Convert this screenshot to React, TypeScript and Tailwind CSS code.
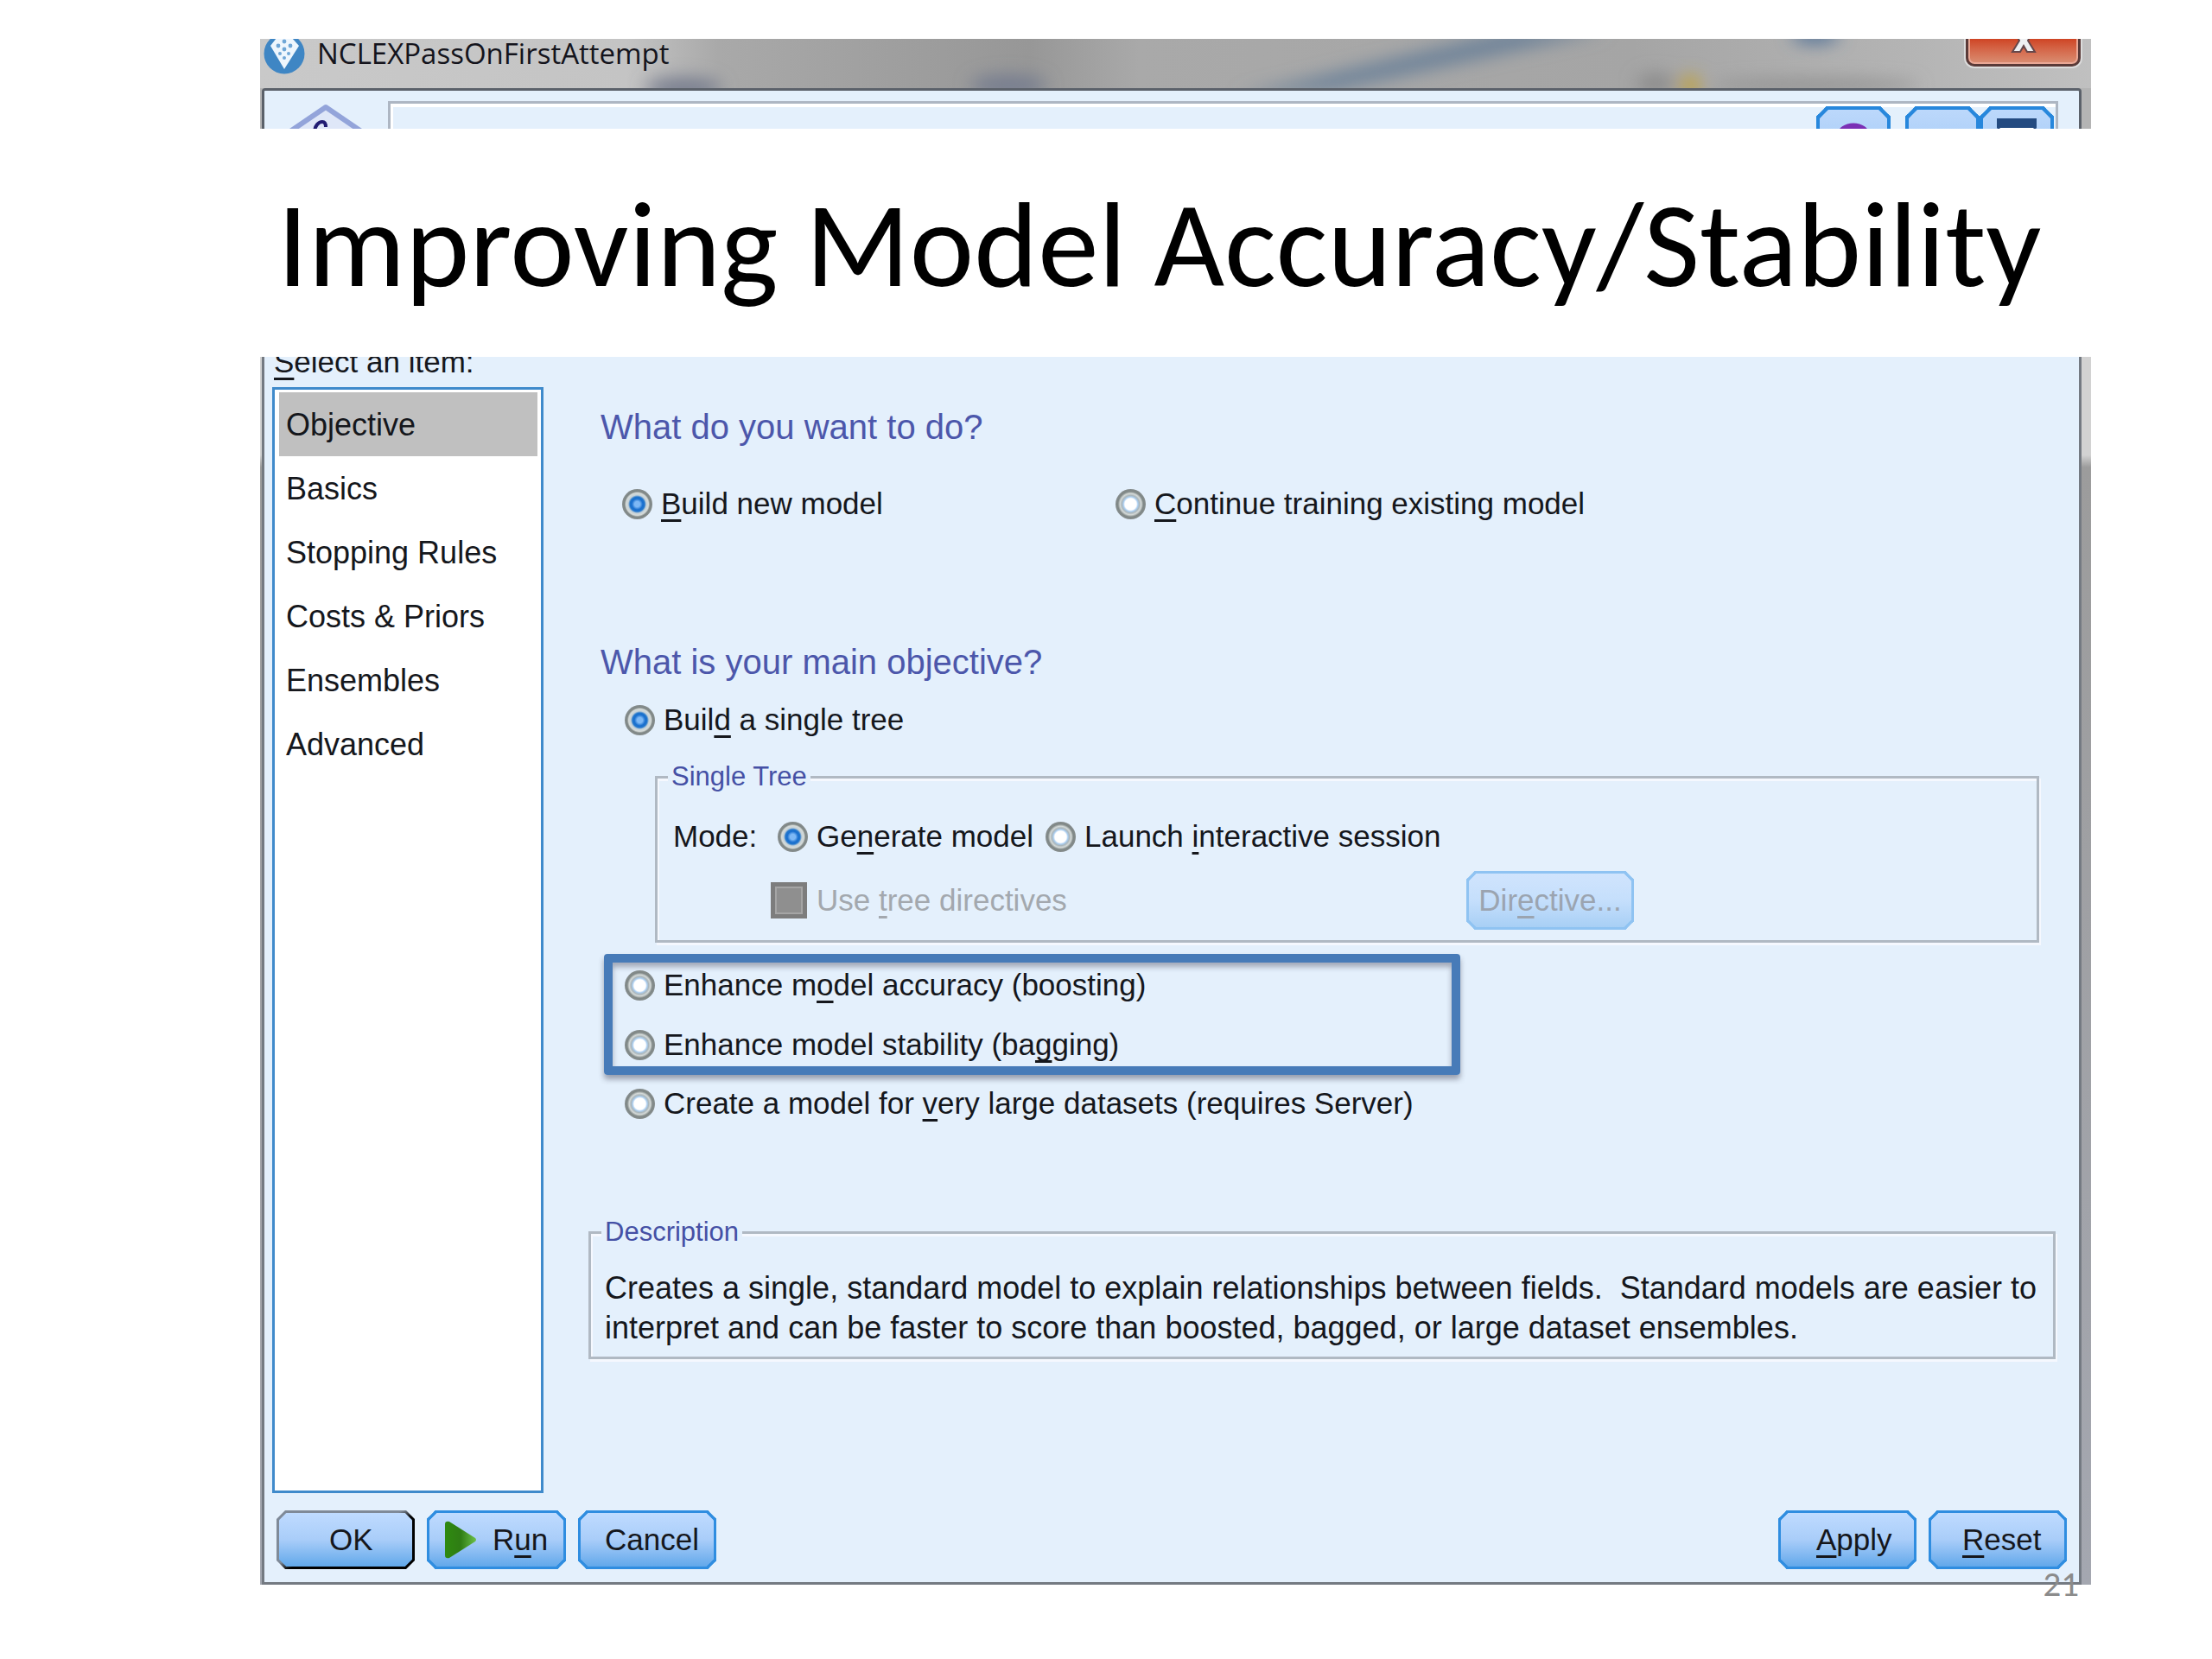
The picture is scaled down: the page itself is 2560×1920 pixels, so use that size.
import { useState, type ReactNode } from "react";
import clsx from "clsx";

const ITEMS = ["Objective", "Basics", "Stopping Rules", "Costs & Priors", "Ensembles", "Advanced"];

const RADIO =
	"h-[35px] w-[35px] shrink-0 appearance-none rounded-full bg-[radial-gradient(circle_closest-side,#ffffff_0_38%,#a9cdf0_48%,#aab6bc_58%,#d5dad8_70%,#7f8786_84%,#868d8d_100%)] checked:bg-[radial-gradient(circle_closest-side,#7db8f5_0_18%,#1a70cf_36%,#1f74cc_48%,#c6d2d8_60%,#d5dad8_74%,#7f8786_84%,#868d8d_100%)]";

const BUTTON =
	"flex h-[68px] shrink-0 items-center rounded-[10px] border-[3px] text-[35px] leading-[40px] [corner-shape:bevel]";

const BUTTON_FACE = "border-[#2f8de0] bg-linear-to-b from-[#bfdbff] via-[#a9cdf9] to-[#61a8ea]";

// Default button: lit from the top left, black on the far edges
const BUTTON_DEFAULT =
	"border-transparent [background:linear-gradient(#bfdbff,#a9cdf9,#61a8ea)_padding-box,linear-gradient(to_bottom_right,#7f8a98_46%,#000000_54%)_border-box]";

const FIELDSET =
	"border-[3px] border-[#b0b9c3] shadow-[inset_2px_3px_0_#f5f8fe,2px_3px_0_#f5f8fe]";

const LEGEND = "bg-[#e4f0fc] px-1 text-[31px] leading-[36px] text-[#4550a5]";

// Access-key letter of a label
function Key({ children }: { children: string }) {
	return (
		<span className="underline decoration-[3px] underline-offset-[6px] [text-decoration-skip-ink:none]">{children}</span>
	);
}

interface RadioProps {
	name: string;
	value: string;
	current: string;
	onSelect: (value: string) => void;
	children: ReactNode;
}

function Radio({ name, value, current, onSelect, children }: RadioProps) {
	return (
		<label className="flex items-center gap-[10px] text-[35px] leading-[36px] whitespace-nowrap">
			<input type="radio" name={name} value={value} checked={current === value} onChange={() => onSelect(value)} className={RADIO} />
			<span>{children}</span>
		</label>
	);
}

function AppIcon() {
	return (
		<svg viewBox="0 0 48 48" className="h-12 w-12 shrink-0" aria-hidden="true">
			<circle cx="24" cy="24" r="23.5" fill="#3f86c4" />
			<path d="M8 15 L15 6 H33 L41 15 L24 42 Z" fill="#eef6fd" />
			<g fill="#6fa6d6">
				<circle cx="24" cy="10" r="2.4" />
				<circle cx="17" cy="15" r="2.4" />
				<circle cx="31" cy="15" r="2.4" />
				<circle cx="24" cy="19" r="2.4" />
				<circle cx="19" cy="24" r="2" />
				<circle cx="29" cy="24" r="2" />
				<circle cx="24" cy="29" r="2" />
			</g>
		</svg>
	);
}

// Blurred desktop seen through the glass title bar
function GlassReflection() {
	return (
		<svg viewBox="0 0 2119 57" preserveAspectRatio="none" className="absolute inset-0 h-full w-full" aria-hidden="true">
			<defs>
				<filter id="soft" x="-20%" y="-60%" width="140%" height="220%">
					<feGaussianBlur stdDeviation="10" />
				</filter>
				<linearGradient id="glass">
					<stop offset="0" stopColor="#c9c9c9" />
					<stop offset="0.2" stopColor="#c4c4c4" />
					<stop offset="0.25" stopColor="#a9a9a9" />
					<stop offset="0.42" stopColor="#979797" />
					<stop offset="0.48" stopColor="#a9a9a9" />
					<stop offset="0.75" stopColor="#a5a5a5" />
					<stop offset="0.9" stopColor="#b4b4b4" />
					<stop offset="1" stopColor="#c0c0c0" />
				</linearGradient>
			</defs>
			<rect width="2119" height="57" fill="url(#glass)" />
			<g filter="url(#soft)">
				<ellipse cx="490" cy="57" rx="44" ry="12" fill="#747a8c" />
				<ellipse cx="866" cy="54" rx="44" ry="12" fill="#747b8e" />
				<path d="M1130 66 L1240 60 L1560 -10 L1450 -10 Z" fill="#6d8299" />
				<ellipse cx="1800" cy="-4" rx="28" ry="9" fill="#4f6f96" />
				<ellipse cx="1615" cy="52" rx="22" ry="12" fill="#8b8b8b" />
				<ellipse cx="1655" cy="54" rx="12" ry="12" fill="#c0a23e" />
				<ellipse cx="1800" cy="54" rx="120" ry="7" fill="#8e8e8e" />
			</g>
		</svg>
	);
}

function ModelIcon() {
	return (
		<svg viewBox="0 0 96 96" className="mt-[3px] h-24 w-24 shrink-0" aria-hidden="true">
			<path d="M48 4 L92 34 V70 L48 94 L4 70 V34 Z" fill="#dfe7f8" stroke="#93a4da" strokeWidth="6" strokeLinejoin="round" />
			<path d="M35 34 C35 25 40 21 44 21 C47 21 48 23 48 27" fill="none" stroke="#211c72" strokeWidth="4" />
		</svg>
	);
}

function TitleBar() {
	return (
		<div className="relative flex h-[57px] shrink-0 items-start justify-between overflow-hidden">
			<GlassReflection />
			<div className="relative -mt-[7px] flex items-center gap-[14px] pl-1">
				<AppIcon />
				<span className="font-['Open_Sans',sans-serif] text-[33px] leading-[48px] text-[#14141c]">NCLEXPassOnFirstAttempt</span>
			</div>
			<button type="button" aria-label="Close" className="relative mr-3 -mt-8 flex h-[64px] w-[133px] items-end justify-center rounded-[10px] border-[3px] border-[#5a3a38] bg-linear-to-b from-[#c93a1c] from-50% via-[#cf4423] to-[#d98f74] pb-3 shadow-[0_0_0_2px_#dcdcdc,inset_0_0_0_2px_#e9a795]">
				<svg viewBox="0 0 30 30" className="h-[30px] w-[30px]" aria-hidden="true">
					<path d="M3 2 H11 L15 9 L19 2 H27 L20 15 L28 28 H19 L15 21 L11 28 H2 L10 15 Z" fill="#eef0f2" stroke="#65474a" strokeWidth="2" />
				</svg>
			</button>
		</div>
	);
}

function Toolbar() {
	const tool = "flex h-[86px] w-[86px] justify-center rounded-[12px] border-[4px] border-[#2787dc] bg-linear-to-b from-[#bcd8fb] to-[#9cc5f5] [corner-shape:bevel]";
	return (
		<div className="ml-[2px] mr-[11px] flex min-w-0 flex-1 items-start rounded-t-[4px] border-[3px] border-b-0 border-[#5b616a] bg-[#e4f0fc] pl-[23px] pt-3">
			<ModelIcon />
			<div className="mr-6 ml-[24px] flex h-24 flex-1 justify-end border-x-[3px] border-t-[3px] border-[#adb6c3] shadow-[inset_3px_4px_0_#ffffff]">
				<button type="button" aria-label="Help" className={clsx(tool, "mr-[17px] mt-[3px]")}>
					<svg viewBox="0 0 40 60" className="mt-[14px] h-[60px] w-10" aria-hidden="true">
						<path d="M5 18 C5 2 35 2 35 18 C35 30 20 28 20 42" fill="none" stroke="#7a2fb5" strokeWidth="9" />
					</svg>
				</button>
				<button type="button" aria-label="Minimize" className={clsx(tool, "mt-[3px]")} />
				<button type="button" aria-label="Maximize" className={clsx(tool, "mt-[3px] mr-[2px]")}>
					<svg viewBox="0 0 46 50" className="mt-[10px] h-[50px] w-[46px]" aria-hidden="true">
						<rect x="2" y="2" width="42" height="46" fill="#ffffff" stroke="#234a80" strokeWidth="3" />
						<rect width="46" height="11" fill="#234a80" />
					</svg>
				</button>
			</div>
		</div>
	);
}

export default function App() {
	const [item, setItem] = useState("Objective");
	const [task, setTask] = useState("new");
	const [objective, setObjective] = useState("single");
	const [mode, setMode] = useState("generate");

	return (
		<main className="min-h-screen bg-white pt-[45px] pr-[140px] pl-[301px] font-['Liberation_Sans',Arial,sans-serif] text-[#15171c]">
			<header className="flex h-[104px] flex-col overflow-hidden bg-[#b4b4b4]">
				<TitleBar />
				<Toolbar />
			</header>

			<div className="flex h-[264px] items-center pt-1 pl-5">
				<h1 className="font-['Carlito','Calibri','Lato',sans-serif] text-[141px] leading-[160px] whitespace-nowrap text-black">
					Improving Model Accuracy/Stability
				</h1>
			</div>

			<div className="relative">
				<div className="overflow-hidden bg-linear-to-b from-[#d2d2d2] from-8% via-[#9c9c9c] via-9% to-[#a4a7b0] pr-[11px] pl-[2px]">
					<div className="flex flex-col border-x-[3px] border-b-[3px] border-[#747a82] bg-[#e4f0fc] pb-[15px]">
						<div className="flex">
							<nav className="ml-[9px] flex w-[314px] shrink-0 flex-col">
								<span id="items" className="-mt-[14px] mb-[9px] pl-[2px] text-[35px] leading-[40px] whitespace-nowrap">
									<Key>S</Key>elect an item:
								</span>
								<ul aria-labelledby="items" className="flex-1 border-[3px] border-[#3f8acb] bg-white py-[3px] pr-1 pl-[5px]">
									{ITEMS.map((name) => (
										<li key={name}>
											<button type="button" onClick={() => setItem(name)} className={clsx("h-[74px] w-full pt-[2px] pl-2 text-left text-[36px] leading-[40px]", item === name && "bg-[#c0c0c0]")}>
												{name}
											</button>
										</li>
									))}
								</ul>
							</nav>

							<section className="mr-[27px] ml-[52px] flex min-w-0 flex-1 flex-col pt-[59px] pb-[155px]">
								<h2 className="pl-[14px] text-[40px] leading-[44px] text-[#4c57ab]">What do you want to do?</h2>
								<div className="mt-[49px] flex pl-[39px]">
									<div className="w-[571px]">
										<Radio name="task" value="new" current={task} onSelect={setTask}><Key>B</Key>uild new model</Radio>
									</div>
									<Radio name="task" value="continue" current={task} onSelect={setTask}><Key>C</Key>ontinue training existing model</Radio>
								</div>

								<h2 className="mt-[143px] pl-[14px] text-[40px] leading-[44px] text-[#4c57ab]">What is your main objective?</h2>
								<div className="mt-[27px] pl-[42px]">
									<Radio name="objective" value="single" current={objective} onSelect={setObjective}>Buil<Key>d</Key> a single tree</Radio>
								</div>

								<fieldset className={clsx(FIELDSET, "mt-[30px] mr-[19px] ml-[77px] pb-3 pl-[18px]")}>
									<legend className={clsx(LEGEND, "-ml-[6px]")}>Single Tree</legend>
									<div className="mt-[33px] flex items-center gap-[14px]">
										<span className="w-[107px] text-[35px] leading-[36px]">Mode:</span>
										<Radio name="mode" value="generate" current={mode} onSelect={setMode}>Ge<Key>n</Key>erate model</Radio>
										<Radio name="mode" value="launch" current={mode} onSelect={setMode}>Launch <Key>i</Key>nteractive session</Radio>
									</div>
									<div className="mt-[22px] flex items-center pl-[113px]">
										<label className="flex w-[805px] items-center gap-[11px] text-[35px] leading-[40px] text-[#a3a8ae]">
											<input type="checkbox" disabled className="h-[42px] w-[42px] appearance-none border-[5px] border-[#7d7d7d] bg-[#8f8f8f] shadow-[inset_0_0_0_2px_#a5a5a5]" />
											<span>Use <Key>t</Key>ree directives</span>
										</label>
										<button type="button" disabled className={clsx(BUTTON, "w-[194px] justify-center border-[#8fc3f2] bg-linear-to-b from-[#d0e4fd] via-[#c5dffc] to-[#a8cff5] text-[#9ba4b0]")}>
											<span>Dir<Key>e</Key>ctive...</span>
										</button>
									</div>
								</fieldset>

								<div className="mt-[13px] ml-[18px] flex w-[991px] flex-col gap-[33px] rounded-[4px] border-[10px] border-[#477bb8] pt-2 pb-[7px] pl-[14px] shadow-[0_5px_6px_rgba(60,60,80,0.45),inset_0_5px_6px_rgba(60,60,80,0.4)]">
									<Radio name="objective" value="boosting" current={objective} onSelect={setObjective}>Enhance m<Key>o</Key>del accuracy (boosting)</Radio>
									<Radio name="objective" value="bagging" current={objective} onSelect={setObjective}>Enhance model stability (ba<Key>g</Key>ging)</Radio>
								</div>
								<div className="mt-[15px] pl-[42px]">
									<Radio name="objective" value="large" current={objective} onSelect={setObjective}>Create a model for <Key>v</Key>ery large datasets (requires Server)</Radio>
								</div>

								<fieldset className={clsx(FIELDSET, "mt-[113px] pr-1 pb-[10px] pl-[16px]")}>
									<legend className={clsx(LEGEND, "-ml-1")}>Description</legend>
									<p className="mt-[24px] text-[36px] leading-[46px]">
										Creates a single, standard model to explain relationships between fields.&nbsp; Standard models are easier to interpret and can be faster to score than boosted, bagged, or large dataset ensembles.
									</p>
								</fieldset>
							</section>
						</div>

						<footer className="mt-[20px] flex gap-[14px] pr-[14px] pl-[14px]">
							<button type="button" className={clsx(BUTTON, BUTTON_DEFAULT, "w-[160px] pl-[58px]")}>OK</button>
							<button type="button" className={clsx(BUTTON, BUTTON_FACE, "w-[161px] gap-[18px] pl-[17px]")}>
								<svg viewBox="0 0 38 44" className="h-[44px] w-[38px]" aria-hidden="true">
									<defs>
										<linearGradient id="play">
											<stop offset="0" stopColor="#2f8a10" />
											<stop offset="0.5" stopColor="#2f7d14" />
											<stop offset="1" stopColor="#6cc04a" />
										</linearGradient>
									</defs>
									<path d="M1 4 Q1 0 6 1 L36 20 Q38 22 36 24 L6 43 Q1 44 1 40 Z" fill="url(#play)" />
								</svg>
								<span>R<Key>u</Key>n</span>
							</button>
							<button type="button" className={clsx(BUTTON, BUTTON_FACE, "w-[160px] pl-[28px]")}>Cancel</button>
							<button type="button" className={clsx(BUTTON, BUTTON_FACE, "ml-auto w-[160px] pl-[41px]")}>
								<span><Key>A</Key>pply</span>
							</button>
							<button type="button" className={clsx(BUTTON, BUTTON_FACE, "w-[160px] pl-[36px]")}>
								<span><Key>R</Key>eset</span>
							</button>
						</footer>
					</div>
				</div>
				<span className="absolute right-[14px] -bottom-[22px] font-['Carlito','Calibri','Lato',sans-serif] text-[41px] leading-[46px] text-[#8b8b8b]">21</span>
			</div>
		</main>
	);
}
